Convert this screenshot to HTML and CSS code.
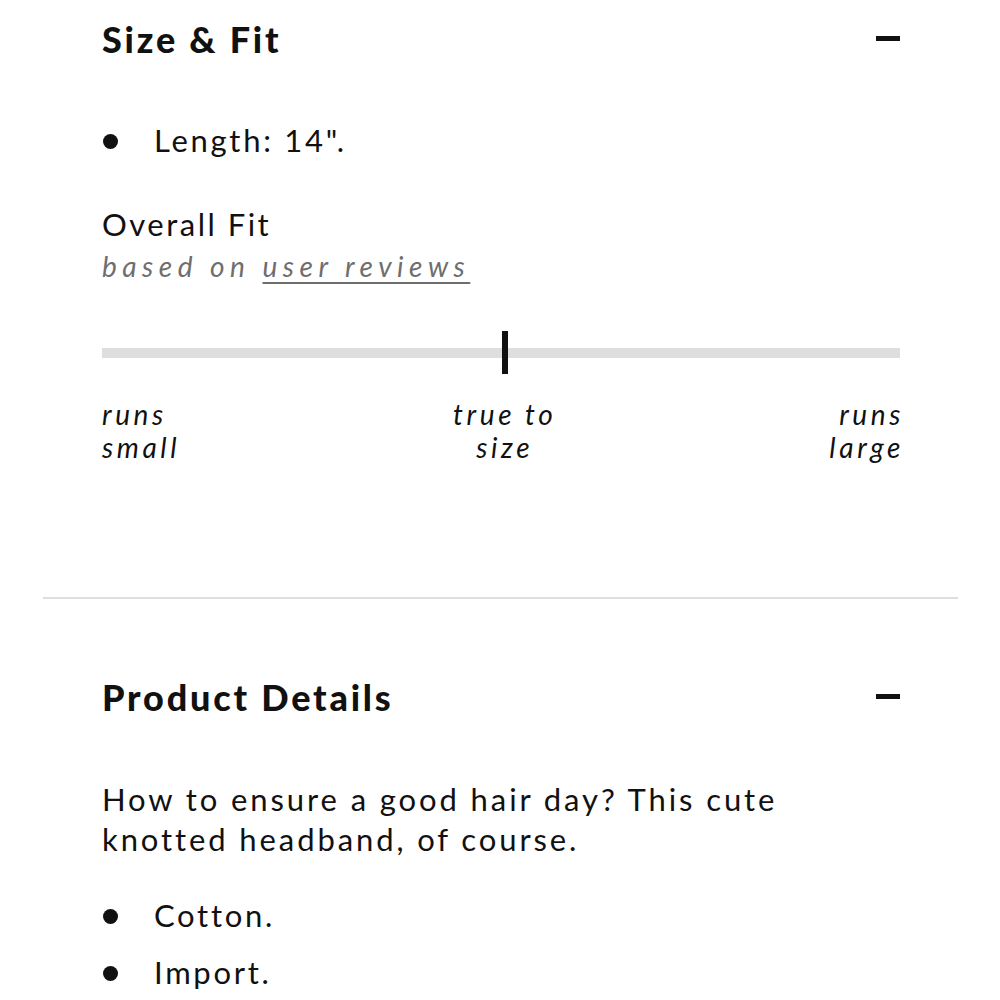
FILE: index.html
```html
<!DOCTYPE html>
<html lang="en">

<head>
  <meta charset="UTF-8">
  <meta name="viewport" content="width=device-width, initial-scale=1.0">
  <title>Size &amp; Fit</title>
  <link rel="stylesheet" href="styles.css">
</head>

<body>
  <main class="panel">
    <section class="accordion fit">
      <div class="accordion-head">
        <h2>Size &amp; Fit</h2>
        <span class="toggle"></span>
      </div>
      <ul class="bullets">
        <li>Length: 14".</li>
      </ul>
      <div class="overall">
        <p class="overall-title">Overall Fit</p>
        <p class="overall-note">based on <a href="#">user reviews</a></p>
      </div>
      <div class="meter">
        <div class="meter-track"></div>
        <div class="meter-mark"></div>
      </div>
      <div class="meter-labels">
        <span>runs<br>small</span>
        <span class="mid">true to<br>size</span>
        <span class="end">runs<br>large</span>
      </div>
    </section>

    <section class="accordion details">
      <div class="accordion-head">
        <h2>Product Details</h2>
        <span class="toggle"></span>
      </div>
      <p class="copy">How to ensure a good hair day? This cute knotted headband, of course.</p>
      <ul class="bullets">
        <li>Cotton.</li>
        <li>Import.</li>
      </ul>
    </section>
  </main>
</body>

</html>
```

FILE: styles.css
```css
body {
  margin: 0;
  font-family: Lato, "Noto Sans", sans-serif;
  background-color: white;
  color: #111;
}

.panel {
  margin: 0 42px 0 43px;
}

.accordion {
  padding: 0 58px 0 59px;
}

.fit {
  border-bottom: 2px solid #dedede;
  padding-bottom: 133px;
}

.accordion-head {
  display: flex;
  justify-content: space-between;
  align-items: center;
  height: 78px;
}

.accordion-head h2 {
  margin: 0;
  font-size: 36px;
  font-weight: 900;
  letter-spacing: 2.8px;
}

.toggle {
  width: 24px;
  height: 5px;
  margin-top: -2px;
  background: #111;
}

.bullets {
  list-style: none;
  margin: 0;
  padding: 0;
}

.bullets li {
  position: relative;
  padding-left: 52px;
  font-size: 31px;
  line-height: 57px;
  letter-spacing: 2.7px;
}

.bullets li::before {
  content: "";
  position: absolute;
  left: 1px;
  top: 22px;
  width: 15px;
  height: 15px;
  border-radius: 50%;
  background: #111;
}

.fit .bullets {
  margin-top: 34px;
}

.overall {
  margin-top: 33px;
}

.overall p {
  margin: 0;
}

.overall-title {
  font-size: 31px;
  line-height: 44px;
  letter-spacing: 2.5px;
}

.overall-note {
  font-size: 28px;
  line-height: 40px;
  font-style: italic;
  letter-spacing: 5.5px;
  color: #6e6e6e;
}

.overall-note a {
  color: inherit;
  text-decoration: underline;
  text-decoration-thickness: 2px;
  text-underline-offset: 5px;
}

.meter {
  position: relative;
  margin-top: 45px;
  height: 43px;
  display: flex;
  align-items: center;
}

.meter-track {
  flex: 1;
  height: 10px;
  background: #dedede;
}

.meter-mark {
  position: absolute;
  left: 400px;
  top: 0;
  width: 6px;
  height: 43px;
  background: #111;
}

.meter-labels {
  display: flex;
  justify-content: space-between;
  margin-top: 24px;
  font-size: 28px;
  line-height: 33px;
  font-style: italic;
  letter-spacing: 3.6px;
}

.meter-labels .mid {
  text-align: center;
}

.meter-labels .end {
  text-align: right;
  margin-right: -4px;
}

.details .accordion-head {
  margin-top: 59px;
}

.copy {
  margin: 43px 0 28px;
  font-size: 31px;
  line-height: 40px;
  letter-spacing: 2.9px;
}
```
